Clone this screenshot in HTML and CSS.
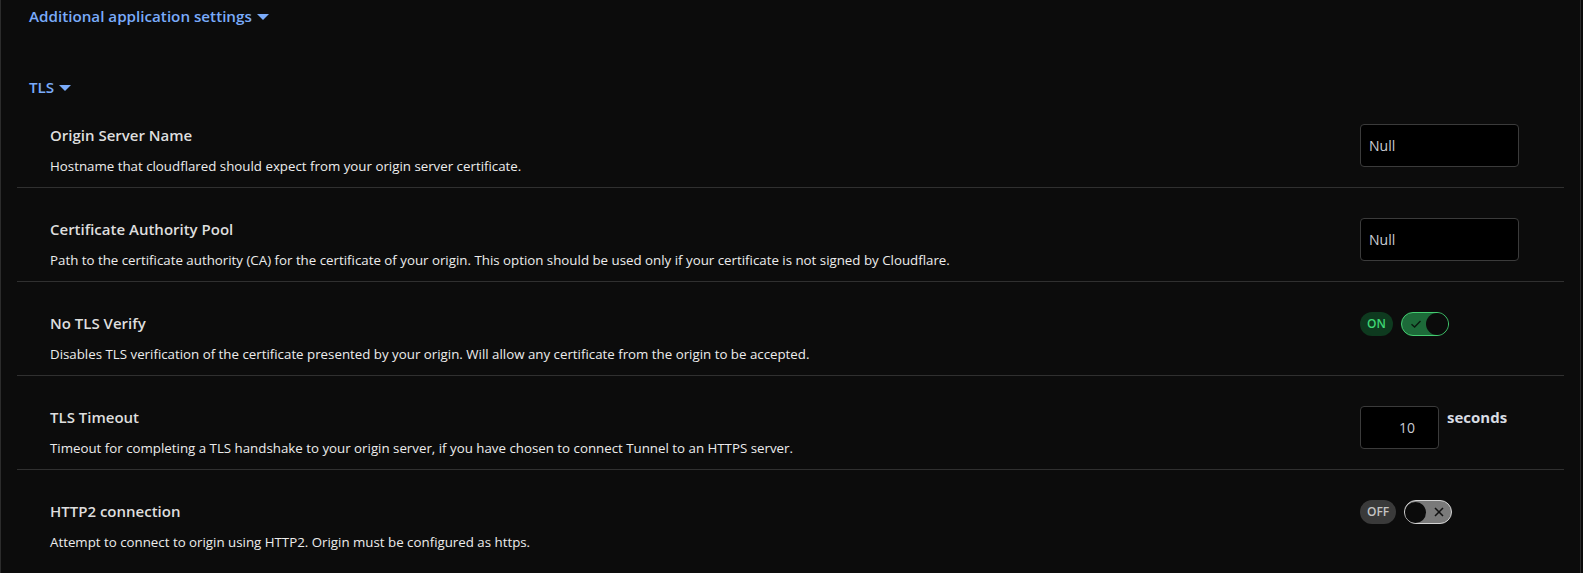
FILE: index.html
```html
<!DOCTYPE html>
<html lang="en">
<head>
<meta charset="utf-8">
<title>Additional application settings</title>
<link rel="stylesheet" href="styles.css">
</head>
<body>
<div class="panel">
  <div class="heading heading-top">Additional application settings <span class="caret"></span></div>
  <div class="heading heading-tls">TLS <span class="caret"></span></div>
  <div class="rows">
    <div class="row">
      <div class="info">
        <div class="title">Origin Server Name</div>
        <div class="desc">Hostname that cloudflared should expect from your origin server certificate.</div>
      </div>
      <div class="control">
        <div class="input text-input">Null</div>
      </div>
    </div>
    <div class="row">
      <div class="info">
        <div class="title">Certificate Authority Pool</div>
        <div class="desc">Path to the certificate authority (CA) for the certificate of your origin. This option should be used only if your certificate is not signed by Cloudflare.</div>
      </div>
      <div class="control">
        <div class="input text-input">Null</div>
      </div>
    </div>
    <div class="row">
      <div class="info">
        <div class="title">No TLS Verify</div>
        <div class="desc">Disables TLS verification of the certificate presented by your origin. Will allow any certificate from the origin to be accepted.</div>
      </div>
      <div class="control">
        <span class="pill pill-on">ON</span>
        <span class="track track-on">
          <svg class="tick" width="12" height="10" viewBox="0 0 12 10"><path d="M1.5 5.2 L4.6 8 L10.5 2" fill="none" stroke="#0a1a10" stroke-width="1.4"/></svg>
          <span class="knob"></span>
        </span>
      </div>
    </div>
    <div class="row">
      <div class="info">
        <div class="title">TLS Timeout</div>
        <div class="desc">Timeout for completing a TLS handshake to your origin server, if you have chosen to connect Tunnel to an HTTPS server.</div>
      </div>
      <div class="control">
        <div class="input num-input">10</div>
        <span class="unit">seconds</span>
      </div>
    </div>
    <div class="row">
      <div class="info">
        <div class="title">HTTP2 connection</div>
        <div class="desc">Attempt to connect to origin using HTTP2. Origin must be configured as https.</div>
      </div>
      <div class="control">
        <span class="pill pill-off">OFF</span>
        <span class="track track-off">
          <span class="knob"></span>
          <svg class="cross" width="12" height="12" viewBox="0 0 12 12"><path d="M2 2 L10 10 M10 2 L2 10" fill="none" stroke="#111" stroke-width="1.5"/></svg>
        </span>
      </div>
    </div>
  </div>
</div>
</body>
</html>
```

FILE: styles.css
```css
* { box-sizing: border-box; }
html, body {
  margin: 0;
  padding: 0;
  background: #0b0b0b;
}
body {
  font-family: "Open Sans", "Noto Sans", sans-serif;
  color: #e6e6e6;
}
.panel {
  width: 1581px;
  height: 573px;
  border-left: 1px solid #2c2c2c;
  border-right: 1px solid #2c2c2c;
  background: #0c0c0c;
  padding-top: 6px;
  overflow: hidden;
}
.heading {
  color: #7aabfa;
  font-weight: 600;
  font-size: 15.2px;
  line-height: 20px;
  padding-left: 28px;
  display: flex;
  align-items: center;
  gap: 5px;
}
.heading-tls {
  margin-top: 51px;
}
.caret {
  width: 0;
  height: 0;
  border-left: 6px solid transparent;
  border-right: 6px solid transparent;
  border-top: 6px solid #7aabfa;
  margin-top: 1px;
}
.rows {
  margin: 0 16px;
}
.row {
  display: flex;
  align-items: flex-start;
  height: 94px;
  padding: 30px 45px 0 33px;
  border-bottom: 1px solid #303030;
}
.row:first-child {
  height: 91px;
  padding-top: 27px;
}
.row:last-child {
  border-bottom: none;
}
.info {
  flex: 1;
  min-width: 0;
}
.title {
  font-size: 15px;
  font-weight: 600;
  line-height: 22px;
  color: #dedede;
}
.desc {
  font-size: 13.3px;
  line-height: 20px;
  margin-top: 10px;
  color: #ececec;
}
.control {
  width: 159px;
  flex: none;
  display: flex;
  align-items: flex-start;
  gap: 8px;
}
.input {
  height: 43px;
  background: #000;
  border: 1px solid #3b3b3b;
  border-radius: 4px;
  font-size: 14px;
  color: #c9ccd3;
  display: flex;
  align-items: center;
}
.text-input {
  width: 159px;
  padding-left: 8px;
}
.num-input {
  width: 79px;
  justify-content: center;
  padding-left: 15px;
}
.unit {
  font-size: 15px;
  font-weight: 700;
  line-height: 22px;
  color: #d9dde4;
}
.pill {
  height: 24px;
  line-height: 24px;
  padding: 0 7px;
  border-radius: 12px;
  font-size: 12px;
  font-weight: 600;
}
.pill-on {
  background: #0e3a1f;
  color: #3fd675;
}
.pill-off {
  background: #3a3a3a;
  color: #c4c4c4;
}
.track {
  width: 48px;
  height: 24px;
  border-radius: 12px;
  display: flex;
  align-items: center;
}
.track-on {
  background: #1d6a39;
  border: 1px solid #44cc70;
  padding-left: 8px;
}
.track-on .knob {
  margin-left: auto;
}
.track-off {
  background: #7a7a7a;
  border: 1.5px solid #d4d4d4;
  padding-right: 6px;
}
.track-off .cross {
  margin-left: auto;
}
.knob {
  width: 22px;
  height: 22px;
  border-radius: 50%;
  background: #0b0b0b;
  flex: none;
}
.track-off .knob {
  width: 21px;
  height: 21px;
}
```
